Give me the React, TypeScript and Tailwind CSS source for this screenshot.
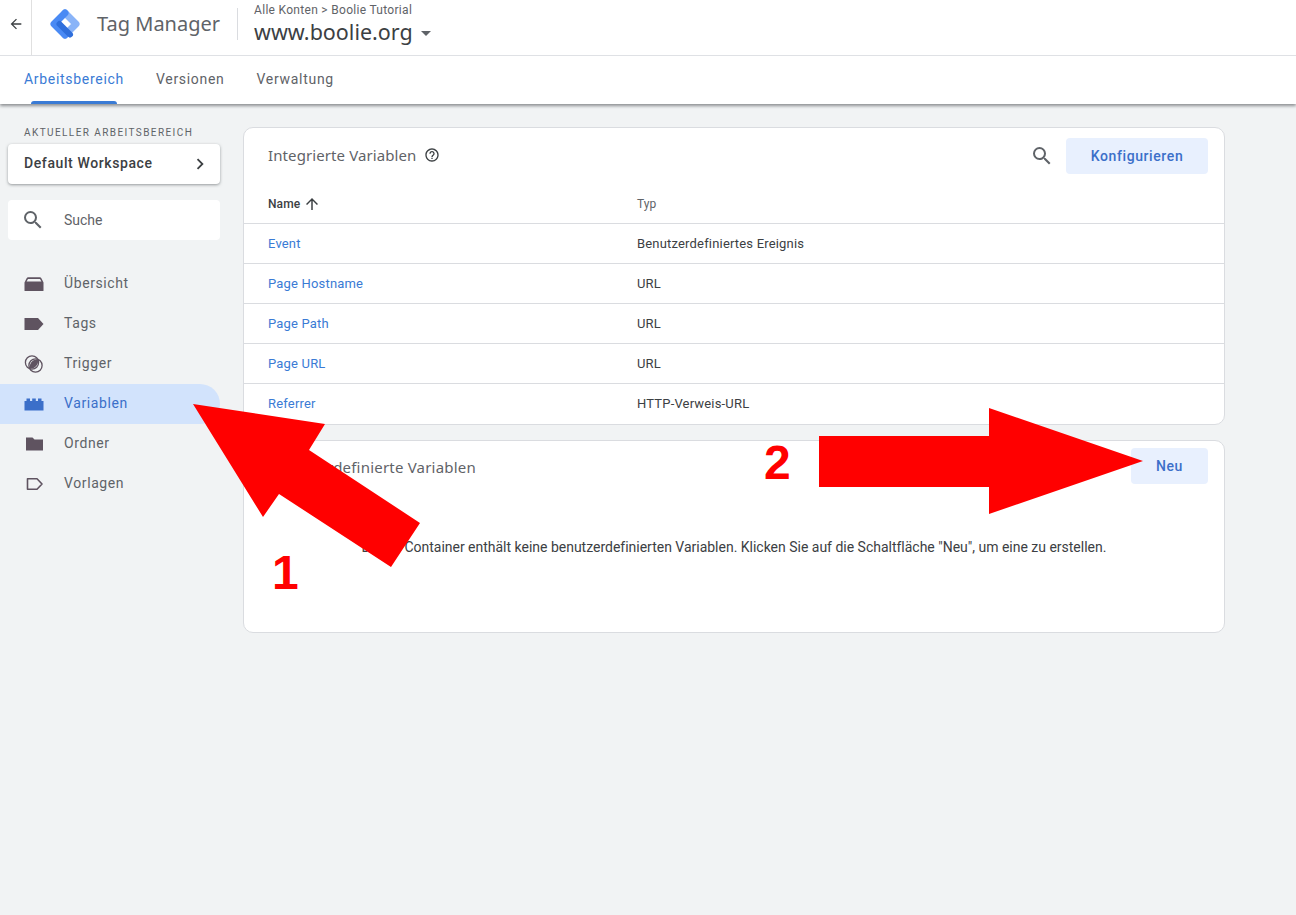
const navItems = [
  { label: "Übersicht", icon: "overview" },
  { label: "Tags", icon: "tags" },
  { label: "Trigger", icon: "trigger" },
  { label: "Variablen", icon: "variables" },
  { label: "Ordner", icon: "folder" },
  { label: "Vorlagen", icon: "templates" },
];

const variables = [
  { name: "Event", type: "Benutzerdefiniertes Ereignis" },
  { name: "Page Hostname", type: "URL" },
  { name: "Page Path", type: "URL" },
  { name: "Page URL", type: "URL" },
  { name: "Referrer", type: "HTTP-Verweis-URL" },
];

// material icon paths, the console uses these
const Icon = ({ d, size, color }: { d: string; size: number; color: string }) => (
  <svg width={size} height={size} viewBox="0 0 24 24" fill={color} className="shrink-0">
    <path d={d} />
  </svg>
);

const searchPath =
  "M15.5 14h-.79l-.28-.27A6.471 6.471 0 0 0 16 9.5 6.5 6.5 0 1 0 9.5 16c1.61 0 3.09-.59 4.23-1.57l.27.28v.79l5 4.99L20.49 19l-4.99-5zm-6 0C7.01 14 5 11.99 5 9.5S7.01 5 9.5 5 14 7.01 14 9.5 11.99 14 9.5 14z";
const backPath = "M20 11H7.83l5.59-5.59L12 4l-8 8 8 8 1.41-1.41L7.83 13H20v-2z";
const upPath = "M4 12l1.41 1.41L11 7.83V20h2V7.83l5.58 5.59L20 12l-8-8-8 8z";
const chevronPath = "M10 6L8.59 7.41 13.17 12l-4.58 4.59L10 18l6-6z";
const helpPath =
  "M11 18h2v-2h-2v2zm1-16C6.48 2 2 6.48 2 12s4.48 10 10 10 10-4.48 10-10S17.52 2 12 2zm0 18c-4.41 0-8-3.59-8-8s3.59-8 8-8 8 3.59 8 8-3.59 8-8 8zm0-14c-2.21 0-4 1.79-4 4h2c0-1.1.9-2 2-2s2 .9 2 2c0 2-3 1.75-3 5h2c0-2.25 3-2.5 3-5 0-2.21-1.79-4-4-4z";

const NavIcon = ({ name }: { name: string }) => {
  const color = name === "variables" ? "#3b6fc9" : "#5f5360";
  return (
    <svg width="20" height="20" viewBox="0 0 20 20" fill={color}>
      {name === "overview" && (
        <path d="M0.5 8.5 2.5 4.5Q3 3.3 4.4 3.3H15.6Q17 3.3 17.5 4.5L19.5 8.5V16.5Q19.5 17 19 17H1Q0.5 17 0.5 16.5ZM2.6 7.5H17.4L16 4.9H4Z" fillRule="evenodd" />
      )}
      {name === "tags" && <path d="M0.5 4H14L19.5 10L14 16H0.5Z" />}
      {name === "trigger" && (
        <>
          <circle cx="8" cy="8.5" r="6.6" fill="none" stroke={color} strokeWidth="1.3" />
          <circle cx="11.5" cy="11.5" r="6.6" fill="none" stroke={color} strokeWidth="1.3" />
          <path d="M5.5 14.5C5 10 8.5 4.5 14 5.5C15 10 11 15.5 5.5 14.5Z" />
        </>
      )}
      {name === "variables" && (
        <path d="M0.5 7H2.5V4.5H6V7H8.2V4.5H11.8V7H14V4.5H17.5V7H19.5V16.5H0.5Z" />
      )}
      {name === "folder" && <path d="M2 3.5H8.5L10.5 5.5H19V16.5H2Z" />}
      {name === "templates" && (
        <path d="M3.5 4.8H13L18 10L13 15.2H3.5Z" fill="none" stroke={color} strokeWidth="1.6" strokeLinejoin="round" />
      )}
    </svg>
  );
};

const Logo = () => (
  <svg width="30" height="30" viewBox="0 0 30 30" fill="none" strokeLinecap="round" strokeLinejoin="round">
    <path d="M15 4 26 15 15 26" stroke="#8ab4f8" strokeWidth="7" />
    <path d="M15 4 4 15 15 26" stroke="#4a8af4" strokeWidth="7" />
    <path d="M9.5 15 15 20.5 20 25.5" stroke="#2f6fdc" strokeWidth="6" />
  </svg>
);

const Header = () => (
  <header className="z-10 bg-white shadow-[0_2px_3px_rgba(60,64,67,0.55)]">
    <div className="flex h-[56px] items-stretch border-b border-[#dfe1e5]">
      <div className="flex w-[32px] items-center justify-center border-r border-[#e0e0e0] pb-[7px]">
        <Icon d={backPath} size={16} color="#3c4043" />
      </div>
      <div className="ml-[18px] flex w-[30px] items-center pb-[7px]">
        <Logo />
      </div>
      <div className="ml-[17px] flex items-center pb-[7px] text-[20px] text-[#5f6368] [font-family:'Noto_Sans',sans-serif]">
        Tag Manager
      </div>
      <div className="mb-[15px] ml-[17px] mr-[16px] mt-[8px] w-px bg-[#dadce0]" />
      <div className="flex flex-col">
        <div className="mt-[2px] flex h-[16px] items-center text-[12px] leading-none tracking-[0.3px] text-[#5f6368]">
          Alle Konten &gt; Boolie Tutorial
        </div>
        <div className="flex items-center text-[21.5px] leading-[28px] text-[#3c4043] [font-family:'Noto_Sans',sans-serif]">
          www.boolie.org
          <span className="ml-[8px] mt-[3px] h-0 w-0 border-x-[5px] border-t-[5px] border-x-transparent border-t-[#5f6368]" />
        </div>
      </div>
    </div>
    <nav className="flex h-[48px] pl-[8px] text-[14px] font-[450] tracking-[0.7px]">
      <a className="relative flex items-center px-[16px] pb-[2px] text-[#3a7bd5]">
        Arbeitsbereich
        <span className="absolute bottom-0 left-[23px] right-[23px] h-[3px] rounded-t bg-[#3a7bd5]" />
      </a>
      <a className="flex items-center px-[16px] pb-[2px] text-[#5f6368]">Versionen</a>
      <a className="flex items-center px-[16px] pb-[2px] text-[#5f6368]">Verwaltung</a>
    </nav>
  </header>
);

const Sidebar = () => (
  <aside className="w-[220px] shrink-0">
    <div className="ml-[24px] mt-[23px] text-[10px] leading-[12px] tracking-[1.42px] text-[#5f6368]">
      AKTUELLER ARBEITSBEREICH
    </div>
    <div className="ml-[8px] mt-[5px] flex h-[40px] items-center justify-between rounded bg-white pb-[1px] pl-[16px] pr-[9px] text-[14px] font-medium tracking-[0.6px] text-[#3c4043] shadow-[0_1px_3px_rgba(60,64,67,0.5)]">
      Default Workspace
      <Icon d={chevronPath} size={22} color="#3c4043" />
    </div>
    <div className="ml-[8px] mt-[16px] flex h-[40px] items-center rounded bg-white pl-[13px] text-[14px] text-[#5f6368]">
      <Icon d={searchPath} size={24} color="#5f6368" />
      <span className="ml-[19px]">Suche</span>
    </div>
    <ul className="mt-[24px]">
      {navItems.map((item) => {
        const active = item.icon === "variables";
        return (
          <li
            key={item.label}
            className={
              active
                ? "flex h-[40px] items-center rounded-r-[20px] bg-[#d2e3fc] pl-[24px] text-[14px] font-[450] tracking-[0.6px] text-[#3b6fc9]"
                : "flex h-[40px] items-center pl-[24px] text-[14px] font-[450] tracking-[0.6px] text-[#5f6368]"
            }
          >
            <NavIcon name={item.icon} />
            <span className="mb-[2px] ml-[20px]">{item.label}</span>
          </li>
        );
      })}
    </ul>
  </aside>
);

const Button = ({ label, width }: { label: string; width: string }) => (
  <button className={`${width} h-[36px] rounded bg-[#e8f0fe] pt-[1px] text-[14px] font-medium tracking-[0.6px] text-[#3b6fc9]`}>
    {label}
  </button>
);

const BuiltInCard = () => (
  <section className="h-[298px] overflow-hidden rounded-[10px] border border-[#dadce0] bg-white">
    <div className="flex h-[55px] items-center justify-between pl-[24px] pr-[16px]">
      <div className="mb-[1px] flex items-center text-[15px] tracking-[0.1px] text-[#5f6368] [font-family:'Noto_Sans',sans-serif]">
        Integrierte Variablen
        <span className="ml-[8px]">
          <Icon d={helpPath} size={16} color="#3c4043" />
        </span>
      </div>
      <div className="flex items-center">
        <span className="mr-[12px]">
          <Icon d={searchPath} size={24} color="#5f6368" />
        </span>
        <Button label="Konfigurieren" width="w-[142px]" />
      </div>
    </div>
    <div className="flex h-[41px] items-center border-b border-[#dadce0] pl-[24px] pt-[1px] text-[12px]">
      <div className="flex w-[369px] items-center font-medium tracking-[0.1px] text-[#3c4043]">
        Name
        <span className="ml-[3px]">
          <Icon d={upPath} size={18} color="#3c4043" />
        </span>
      </div>
      <div className="text-[#5f6368]">Typ</div>
    </div>
    {variables.map((row, i) => (
      <div
        key={row.name}
        className={
          i === variables.length - 1
            ? "flex h-[40px] items-center pl-[24px] text-[13px] tracking-[0.18px]"
            : "flex h-[40px] items-center border-b border-[#dadce0] pl-[24px] text-[13px] tracking-[0.18px]"
        }
      >
        <div className="w-[369px] text-[#3a7bd5]">{row.name}</div>
        <div className="text-[#3c4043]">{row.type}</div>
      </div>
    ))}
  </section>
);

const CustomCard = () => (
  <section className="mt-[15px] h-[193px] rounded-[10px] border border-[#dadce0] bg-white">
    <div className="flex h-[50px] items-center justify-between pl-[24px] pr-[16px]">
      <div className="mt-[2px] text-[15px] tracking-[0.2px] text-[#5f6368] [font-family:'Noto_Sans',sans-serif]">
        Benutzerdefinierte Variablen
      </div>
      <Button label="Neu" width="w-[77px]" />
    </div>
    <p className="mt-[46px] text-center text-[14px] tracking-[-0.01px] text-[#3c4043]">
      Dieser Container enthält keine benutzerdefinierten Variablen. Klicken Sie auf die Schaltfläche "Neu", um eine zu erstellen.
    </p>
  </section>
);

// red annotations drawn over the screenshot
const Annotations = () => (
  <>
    <svg className="pointer-events-none absolute left-0 top-0" width="1296" height="915">
      <polygon fill="#ff0000" points="193,404 325,424 309,450 420,523 391,567 279,494 263,517" />
      <polygon fill="#ff0000" points="819,436 989,436 989,408 1143,461 989,514 989,487 819,487" />
    </svg>
    <span className="absolute left-[272px] top-[545px] text-[48px] font-bold leading-[56px] text-[#ff0000] [font-family:'Liberation_Sans',sans-serif]">
      1
    </span>
    <span className="absolute left-[764px] top-[435px] text-[48px] font-bold leading-[56px] text-[#ff0000] [font-family:'Liberation_Sans',sans-serif]">
      2
    </span>
  </>
);

const App = () => {
  return (
    <div className="relative flex h-[915px] w-[1296px] flex-col overflow-hidden bg-[#f1f3f4] [font-family:Roboto,sans-serif]">
      <Header />
      <main className="flex">
        <Sidebar />
        <div className="ml-[23px] mt-[23px] w-[982px]">
          <BuiltInCard />
          <CustomCard />
        </div>
      </main>
      <Annotations />
    </div>
  );
};

export default App;
